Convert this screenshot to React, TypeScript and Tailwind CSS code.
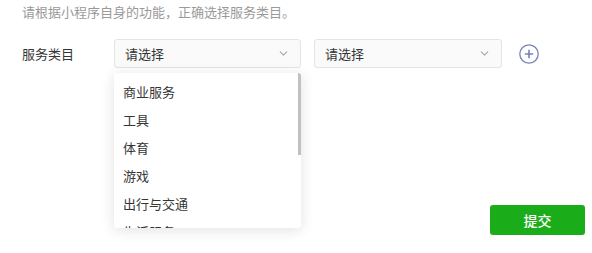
import { ChevronDown } from "lucide-react";

const categories = ["商业服务", "工具", "体育", "游戏", "出行与交通", "生活服务", "教育"];

function Select({ width }: { width: string }) {
  return (
    <div className={`${width} h-[29px] flex items-center justify-between pl-[10px] pr-[10px] bg-[#fafafa] border border-[#e4e4e4] rounded-[3px] text-[13px] text-[#353535]`}>
      <span>请选择</span>
      <ChevronDown size={13} strokeWidth={2} className="text-[#a8a8a8]" />
    </div>
  );
}

export default function App() {
  return (
    <div className="w-[592px] h-[253px] bg-white overflow-hidden relative font-['Noto_Sans_CJK_SC','Noto_Sans',sans-serif]">
      <p className="pl-[22px] pt-[3px] text-[13px] leading-[18px] text-[#9a9a9a]">请根据小程序自身的功能，正确选择服务类目。</p>

      <div className="flex items-center pl-[22px] mt-[18px]">
        <span className="w-[92px] text-[13px] text-[#353535]">服务类目</span>
        <div className="relative">
          <Select width="w-[187px]" />
          <div className="absolute left-0 top-[34px] w-[187px] h-[155px] bg-white rounded-[3px] shadow-[0_2px_14px_rgba(0,0,0,0.12)] overflow-hidden z-10">
            <ul className="pt-[5px]">
              {categories.map((c) => (
                <li key={c} className="h-[28px] flex items-center pl-[9px] text-[13px] text-[#353535]">{c}</li>
              ))}
            </ul>
            <div className="absolute right-0 top-0 w-[3px] h-[82px] bg-[#c1c1c1]" />
          </div>
        </div>
        <div className="ml-[13px]">
          <Select width="w-[188px]" />
        </div>
        <button className="ml-[17px] w-[20px] h-[20px] flex items-center justify-center text-[#7483b4]">
          <svg width="20" height="20" viewBox="0 0 20 20" fill="none" stroke="currentColor" strokeWidth="1.3">
            <circle cx="10" cy="10" r="9.2" />
            <path d="M10 5.8v8.4M5.8 10h8.4" strokeWidth="1.6" />
          </svg>
        </button>
      </div>

      <div className="flex justify-end pr-[7px] mt-[137px]">
        <button className="w-[95px] h-[30px] bg-[#1aad19] rounded-[3px] text-white text-[14px] font-medium">提交</button>
      </div>
    </div>
  );
}
